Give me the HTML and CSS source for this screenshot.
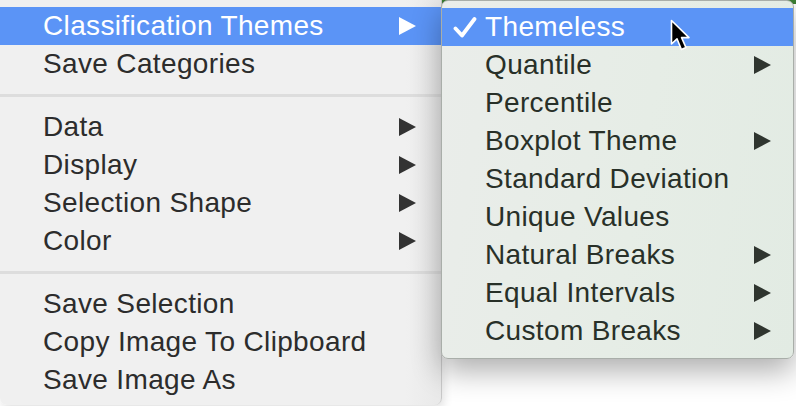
FILE: index.html
```html
<!DOCTYPE html>
<html>
<head>
    <title>Map Menu</title>
    <link rel="stylesheet" href="styles.css">
</head>
<body>
    <div class="menu">
        <div class="item active"><span class="label">Classification Themes</span><span class="arrow"></span></div>
        <div class="item"><span class="label">Save Categories</span></div>
        <div class="sep"></div>
        <div class="item"><span class="label">Data</span><span class="arrow"></span></div>
        <div class="item"><span class="label">Display</span><span class="arrow"></span></div>
        <div class="item"><span class="label">Selection Shape</span><span class="arrow"></span></div>
        <div class="item"><span class="label">Color</span><span class="arrow"></span></div>
        <div class="sep"></div>
        <div class="item"><span class="label">Save Selection</span></div>
        <div class="item"><span class="label">Copy Image To Clipboard</span></div>
        <div class="item"><span class="label">Save Image As</span></div>
    </div>

    <div class="submenu">
        <div class="item active">
            <span class="mark">
                <svg width="24" height="21" viewBox="0 0 24 21"><path d="M2.5 11.5 L9 18.5 L21.5 2" fill="none" stroke="#fff" stroke-width="3.8" stroke-linecap="round" stroke-linejoin="round"/></svg>
            </span>
            <span class="label">Themeless</span>
        </div>
        <div class="item"><span class="mark"></span><span class="label">Quantile</span><span class="arrow"></span></div>
        <div class="item"><span class="mark"></span><span class="label">Percentile</span></div>
        <div class="item"><span class="mark"></span><span class="label">Boxplot Theme</span><span class="arrow"></span></div>
        <div class="item"><span class="mark"></span><span class="label">Standard Deviation</span></div>
        <div class="item"><span class="mark"></span><span class="label">Unique Values</span></div>
        <div class="item"><span class="mark"></span><span class="label">Natural Breaks</span><span class="arrow"></span></div>
        <div class="item"><span class="mark"></span><span class="label">Equal Intervals</span><span class="arrow"></span></div>
        <div class="item"><span class="mark"></span><span class="label">Custom Breaks</span><span class="arrow"></span></div>
    </div>

    <!-- mouse pointer -->
    <svg class="cursor" width="24" height="36" viewBox="0 0 24 36">
        <path d="M1.5 1.5 V25 L7 19.8 L11.4 30.5 L16 28.6 L11.6 18.6 H19 Z" fill="#000" stroke="#fff" stroke-width="1.6" stroke-linejoin="round"/>
    </svg>
</body>
</html>
```

FILE: styles.css
```css
body {
    margin: 0;
    width: 796px;
    height: 406px;
    overflow: hidden;
    position: relative;
    font-family: "Liberation Sans", Arial, sans-serif;
    font-size: 28px;
    letter-spacing: 0.35px;
    background: linear-gradient(#3c7f33 0 4px, #ffffff 4px);
}

.menu {
    width: 441px;
    padding: 7px 0 6px;
    background: linear-gradient(90deg, #f0f0f0 0, #f0f0f0 92%, #e9e9e9 100%);
    border-right: 1px solid #c9c9c9;
    border-radius: 0 0 7px 7px;
    box-shadow: 2px 4px 10px rgba(0, 0, 0, 0.12);
    color: #2c2c2c;
}

.item {
    display: flex;
    align-items: center;
    height: 38px;
    line-height: 38px;
}

.menu .item {
    padding: 0 25px 0 43px;
}

.label {
    flex: 1;
    white-space: nowrap;
}

.arrow {
    width: 0;
    height: 0;
    border-left: 17px solid #333333;
    border-top: 9.5px solid transparent;
    border-bottom: 9.5px solid transparent;
}

.item.active {
    background: #5b94f6;
    color: #ffffff;
}

.item.active .arrow {
    border-left-color: #ffffff;
}

.sep {
    height: 3px;
    margin: 11px 0;
    background: #dddddd;
}

/* submenu lies over the page, next to the open item */
.submenu {
    position: absolute;
    left: 441px;
    top: 0;
    width: 351px;
    padding: 7px 0 8px;
    border: 1px solid #a9aea9;
    border-radius: 7px;
    background: linear-gradient(100deg, #eaedea 0, #e6ede6 55%, #e2ebe3 100%);
    box-shadow: 0 12px 30px rgba(0, 0, 0, 0.32);
    color: #283028;
}

.submenu .item {
    padding-right: 22px;
}

.mark {
    width: 43px;
    display: flex;
    align-items: center;
    padding-left: 11px;
    box-sizing: border-box;
}

.submenu .arrow {
    border-left-color: #2f352f;
}

.cursor {
    position: absolute;
    left: 670px;
    top: 19px;
}
```
